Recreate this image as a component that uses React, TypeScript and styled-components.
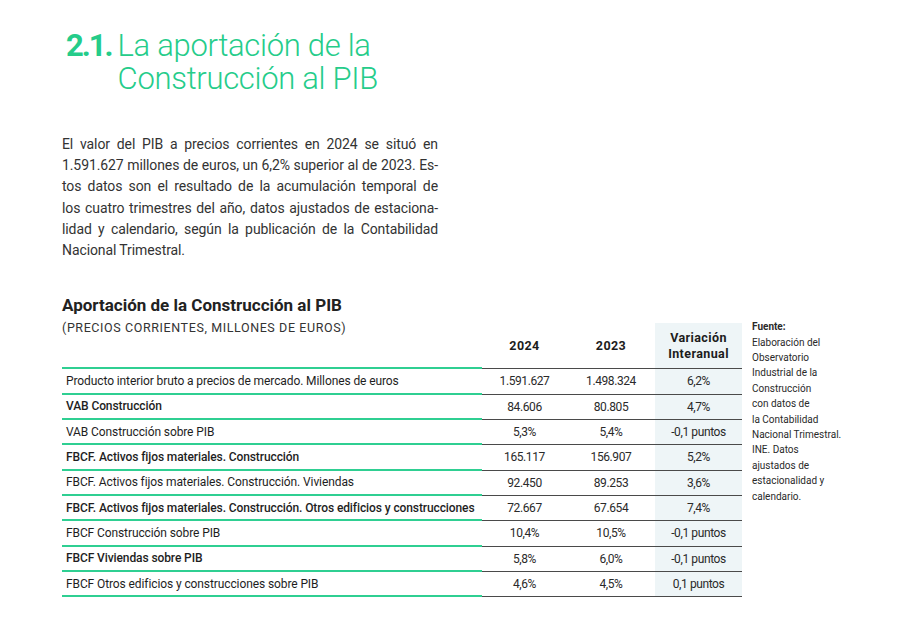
import React from "react";
import styled, { createGlobalStyle } from "styled-components";

const Global = createGlobalStyle`
  html, body { margin: 0; padding: 0; background: #ffffff; }
  body { font-family: Roboto, "Liberation Sans", sans-serif; color: #2a2a2a; }
  * { box-sizing: border-box; }
`;

const GREEN = "#2fcf92";
const TITLE_GREEN = "#25cc8a";
const DARK_LINE = "#4a4a4a";
const VAR_BG = "#eef5f7";

const Page = styled.div`
  width: 907px;
  height: 617px;
  padding: 29px 0 0 62px;
  display: flex;
  flex-direction: column;
`;

const Heading = styled.h1`
  margin: 0 0 0 4px;
  display: flex;
  gap: 6px;
  font-family: Roboto, "Liberation Sans", sans-serif;
  font-weight: 300;
  font-size: 31px;
  line-height: 33px;
  color: ${TITLE_GREEN};
  letter-spacing: -0.3px;
`;

const HeadingNum = styled.span`
  font-weight: 700;
  letter-spacing: -2px;
`;

const HeadingText = styled.span`
  display: flex;
  flex-direction: column;
`;

const Intro = styled.div`
  margin-top: 39px;
  width: 376px;
  font-size: 14px;
  line-height: 21.2px;
  color: #333333;
  letter-spacing: -0.1px;
`;

const IntroLine = styled.div<{ $last?: boolean }>`
  text-align: justify;
  text-align-last: ${(p) => (p.$last ? "left" : "justify")};
  white-space: nowrap;
`;

const TableTitle = styled.h2`
  margin: 34px 0 0 0;
  font-size: 17px;
  line-height: 20px;
  font-weight: 700;
  color: #222222;
`;

const TableRow = styled.div`
  display: flex;
  align-items: flex-start;
  gap: 10px;
  margin-top: 5px;
`;

const Grid = styled.div`
  display: grid;
  grid-template-columns: 420px 85px 88px 87px;
  grid-template-rows: 49px repeat(9, 25.33px);
`;

const HeadCell = styled.div<{ $var?: boolean; $label?: boolean }>`
  display: flex;
  align-items: ${(p) => (p.$label ? "flex-start" : "flex-end")};
  justify-content: ${(p) => (p.$label ? "flex-start" : "center")};
  text-align: center;
  font-size: 12.5px;
  font-weight: ${(p) => (p.$label ? 400 : 700)};
  letter-spacing: ${(p) => (p.$label ? "0.6px" : "0.4px")};
  line-height: 16px;
  color: ${(p) => (p.$label ? "#333" : "#1c1c1c")};
  padding-bottom: ${(p) => (p.$label ? "0" : p.$var ? "6px" : "14px")};
  background: ${(p) => (p.$var ? VAR_BG : "transparent")};
  margin-top: ${(p) => (p.$var ? "3px" : "0")};
  border-bottom-style: solid;
  border-bottom-color: ${(p) => (p.$label ? GREEN : DARK_LINE)};
  border-bottom-width: ${(p) => (p.$label ? "2.5px" : "1.5px")};
`;

const LabelCell = styled.div<{ $strong?: boolean }>`
  display: flex;
  align-items: center;
  padding-left: 4px;
  font-size: 12px;
  font-weight: ${(p) => (p.$strong ? 500 : 400)};
  color: #1e1e1e;
  white-space: nowrap;
  border-bottom: 2.5px solid ${GREEN};
  letter-spacing: -0.1px;
`;

const NumCell = styled.div<{ $var?: boolean }>`
  display: flex;
  align-items: center;
  justify-content: center;
  font-size: 12px;
  color: #2a2a2a;
  letter-spacing: -0.4px;
  background: ${(p) => (p.$var ? VAR_BG : "transparent")};
  border-bottom: 1.5px solid ${DARK_LINE};
`;

const Source = styled.aside`
  font-size: 10px;
  line-height: 15.4px;
  color: #2a2a2a;
  margin-top: -1px;
`;

const SourceLabel = styled.strong`
  font-weight: 700;
  display: block;
`;

const introLines = [
  "El valor del PIB a precios corrientes en 2024 se situó en",
  "1.591.627 millones de euros, un 6,2% superior al de 2023. Es-",
  "tos datos son el resultado de la acumulación temporal de",
  "los cuatro trimestres del año, datos ajustados de estaciona-",
  "lidad y calendario, según la publicación de la Contabilidad",
  "Nacional Trimestral.",
];

const sourceLines = [
  "Elaboración del",
  "Observatorio",
  "Industrial de la",
  "Construcción",
  "con datos de",
  "la Contabilidad",
  "Nacional Trimestral.",
  "INE. Datos",
  "ajustados de",
  "estacionalidad y",
  "calendario.",
];

const rows: [string, string, string, string, boolean][] = [
  ["Producto interior bruto a precios de mercado. Millones de euros", "1.591.627", "1.498.324", "6,2%", false],
  ["VAB Construcción", "84.606", "80.805", "4,7%", true],
  ["VAB Construcción sobre PIB", "5,3%", "5,4%", "-0,1 puntos", false],
  ["FBCF. Activos fijos materiales. Construcción", "165.117", "156.907", "5,2%", true],
  ["FBCF. Activos fijos materiales. Construcción. Viviendas", "92.450", "89.253", "3,6%", false],
  ["FBCF. Activos fijos materiales. Construcción. Otros edificios y construcciones", "72.667", "67.654", "7,4%", true],
  ["FBCF Construcción sobre PIB", "10,4%", "10,5%", "-0,1 puntos", false],
  ["FBCF Viviendas sobre PIB", "5,8%", "6,0%", "-0,1 puntos", true],
  ["FBCF Otros edificios y construcciones sobre PIB", "4,6%", "4,5%", "0,1 puntos", false],
];

export default function App() {
  return (
    <>
      <Global />
      <Page>
        <Heading>
          <HeadingNum>2.1.</HeadingNum>
          <HeadingText>
            <span>La aportación de la</span>
            <span>Construcción al PIB</span>
          </HeadingText>
        </Heading>
        <Intro>
          {introLines.map((l, i) => (
            <IntroLine key={i} $last={i === introLines.length - 1}>
              {l}
            </IntroLine>
          ))}
        </Intro>
        <TableTitle>Aportación de la Construcción al PIB</TableTitle>
        <TableRow>
          <Grid>
            <HeadCell $label>(PRECIOS CORRIENTES, MILLONES DE EUROS)</HeadCell>
            <HeadCell>2024</HeadCell>
            <HeadCell>2023</HeadCell>
            <HeadCell $var>
              Variación
              <br />
              Interanual
            </HeadCell>
            {rows.map(([label, a, b, v, strong]) => (
              <React.Fragment key={label}>
                <LabelCell $strong={strong}>{label}</LabelCell>
                <NumCell>{a}</NumCell>
                <NumCell>{b}</NumCell>
                <NumCell $var>{v}</NumCell>
              </React.Fragment>
            ))}
          </Grid>
          <Source>
            <SourceLabel>Fuente:</SourceLabel>
            {sourceLines.map((l, i) => (
              <div key={i}>{l}</div>
            ))}
          </Source>
        </TableRow>
      </Page>
    </>
  );
}
